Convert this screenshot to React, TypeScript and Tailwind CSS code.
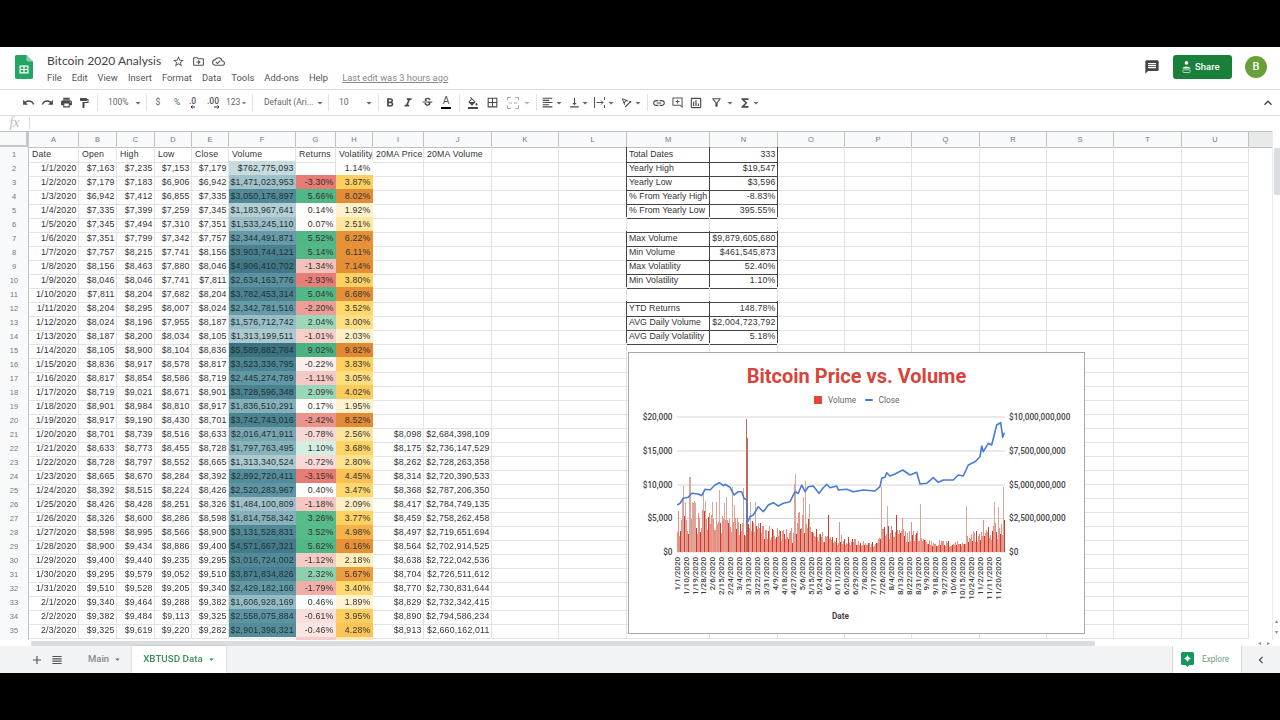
import React from "react";
import {
  MdUndo, MdRedo, MdPrint, MdFormatPaint, MdFormatBold, MdFormatItalic, MdStrikethroughS,
  MdFormatColorFill, MdBorderAll, MdFormatAlignLeft, MdVerticalAlignBottom, MdTextRotationAngleup,
  MdLink, MdOutlineInsertChart, MdOutlineFilterAlt, MdFunctions, MdExpandLess, MdStarBorder,
  MdOutlineDriveFileMove, MdOutlineCloudDone, MdMessage, MdAdd, MdViewHeadline, MdChevronLeft, MdArrowDropDown,
} from "react-icons/md";

const RAW = `1/1/2020|$7,163|$7,235|$7,153|$7,179|$762,775,093||1.14%||
1/2/2020|$7,179|$7,183|$6,906|$6,942|$1,471,023,953|-3.30%|3.87%||
1/3/2020|$6,942|$7,412|$6,855|$7,335|$3,050,176,897|5.66%|8.02%||
1/4/2020|$7,335|$7,399|$7,259|$7,345|$1,183,967,641|0.14%|1.92%||
1/5/2020|$7,345|$7,494|$7,310|$7,351|$1,533,245,110|0.07%|2.51%||
1/6/2020|$7,351|$7,799|$7,342|$7,757|$2,344,491,871|5.52%|6.22%||
1/7/2020|$7,757|$8,215|$7,741|$8,156|$3,903,744,121|5.14%|6.11%||
1/8/2020|$8,156|$8,463|$7,880|$8,046|$4,906,410,702|-1.34%|7.14%||
1/9/2020|$8,046|$8,046|$7,741|$7,811|$2,634,163,776|-2.93%|3.80%||
1/10/2020|$7,811|$8,204|$7,682|$8,204|$3,782,453,314|5.04%|6.68%||
1/11/2020|$8,204|$8,295|$8,007|$8,024|$2,342,781,516|-2.20%|3.52%||
1/12/2020|$8,024|$8,196|$7,955|$8,187|$1,576,712,742|2.04%|3.00%||
1/13/2020|$8,187|$8,200|$8,034|$8,105|$1,313,199,511|-1.01%|2.03%||
1/14/2020|$8,105|$8,900|$8,104|$8,836|$5,589,882,784|9.02%|9.82%||
1/15/2020|$8,836|$8,917|$8,578|$8,817|$3,523,336,795|-0.22%|3.83%||
1/16/2020|$8,817|$8,854|$8,586|$8,719|$2,445,274,789|-1.11%|3.05%||
1/17/2020|$8,719|$9,021|$8,671|$8,901|$3,728,596,348|2.09%|4.02%||
1/18/2020|$8,901|$8,984|$8,810|$8,917|$1,836,510,291|0.17%|1.95%||
1/19/2020|$8,917|$9,190|$8,430|$8,701|$3,742,743,016|-2.42%|8.52%||
1/20/2020|$8,701|$8,739|$8,516|$8,633|$2,016,471,911|-0.78%|2.56%|$8,098|$2,684,398,109
1/21/2020|$8,633|$8,773|$8,455|$8,728|$1,797,763,495|1.10%|3.68%|$8,175|$2,736,147,529
1/22/2020|$8,728|$8,797|$8,552|$8,665|$1,313,340,524|-0.72%|2.80%|$8,262|$2,728,263,358
1/23/2020|$8,665|$8,670|$8,284|$8,392|$2,892,720,411|-3.15%|4.45%|$8,314|$2,720,390,533
1/24/2020|$8,392|$8,515|$8,224|$8,426|$2,520,283,967|0.40%|3.47%|$8,368|$2,787,206,350
1/25/2020|$8,426|$8,428|$8,251|$8,326|$1,484,100,809|-1.18%|2.09%|$8,417|$2,784,749,135
1/26/2020|$8,326|$8,600|$8,286|$8,598|$1,814,758,342|3.26%|3.77%|$8,459|$2,758,262,458
1/27/2020|$8,598|$8,995|$8,566|$8,900|$3,131,528,831|3.52%|4.98%|$8,497|$2,719,651,694
1/28/2020|$8,900|$9,434|$8,886|$9,400|$4,571,667,321|5.62%|6.16%|$8,564|$2,702,914,525
1/29/2020|$9,400|$9,440|$9,235|$9,295|$3,016,724,002|-1.12%|2.18%|$8,638|$2,722,042,536
1/30/2020|$9,295|$9,579|$9,052|$9,510|$3,871,834,826|2.32%|5.67%|$8,704|$2,726,511,612
1/31/2020|$9,510|$9,528|$9,205|$9,340|$2,429,182,166|-1.79%|3.40%|$8,770|$2,730,831,644
2/1/2020|$9,340|$9,464|$9,288|$9,382|$1,606,928,169|0.46%|1.89%|$8,829|$2,732,342,415
2/2/2020|$9,382|$9,484|$9,113|$9,325|$2,558,075,884|-0.61%|3.95%|$8,890|$2,794,586,234
2/3/2020|$9,325|$9,619|$9,220|$9,282|$2,901,398,321|-0.46%|4.28%|$8,913|$2,660,162,011`;
const ROWS = RAW.split("\n").map((l) => l.split("|"));

const SUMMARY: Record<number, [string, string]> = {
  1: ["Total Dates", "333"],
  2: ["Yearly High", "$19,547"],
  3: ["Yearly Low", "$3,596"],
  4: ["% From Yearly High", "-8.83%"],
  5: ["% From Yearly Low", "395.55%"],
  7: ["Max Volume", "$9,879,605,680"],
  8: ["Min Volume", "$461,545,873"],
  9: ["Max Volatility", "52.40%"],
  10: ["Min Volatility", "1.10%"],
  12: ["YTD Returns", "148.78%"],
  13: ["AVG Daily Volume", "$2,004,723,792"],
  14: ["AVG Daily Volatility", "5.18%"],
};

type Stop = [number, [number, number, number]];
function ramp(stops: Stop[], v: number) {
  if (v <= stops[0][0]) return stops[0][1];
  for (let i = 1; i < stops.length; i++) {
    if (v <= stops[i][0]) {
      const [a, ca] = stops[i - 1];
      const [b, cb] = stops[i];
      const t = (v - a) / (b - a);
      return ca.map((c, k) => Math.round(c + (cb[k] - c) * t)) as [number, number, number];
    }
  }
  return stops[stops.length - 1][1];
}
const rgb = (c: number[]) => `rgb(${c[0]},${c[1]},${c[2]})`;
const VOL: Stop[] = [
  [0.76, [200, 219, 223]], [1.2, [180, 206, 212]], [1.5, [159, 192, 200]], [2.0, [122, 168, 178]],
  [2.5, [95, 149, 162]], [3.0, [82, 138, 151]], [4.0, [74, 128, 142]], [5.6, [59, 114, 128]],
];
const RET: Stop[] = [
  [-3.0, [230, 124, 115]], [0.1, [255, 252, 251]], [0.4, [255, 255, 255]], [3.2, [87, 187, 138]], [9, [74, 178, 128]],
];
const VLT: Stop[] = [
  [1.1, [255, 255, 255]], [1.9, [255, 243, 208]], [2.6, [255, 229, 153]], [3.6, [255, 214, 102]],
  [5.0, [246, 176, 74]], [6.1, [230, 145, 56]], [9.8, [226, 136, 50]],
];
const parseNum = (s: string) => parseFloat(s.replace(/[$,%]/g, ""));

const COLS = ["A", "B", "C", "D", "E", "F", "G", "H", "I", "J", "K", "L", "M", "N", "O", "P", "Q", "R", "S", "T", "U"];
const GRID = "grid grid-cols-[29px_50px_38px_38px_37px_37px_67px_40px_37px_51px_68px_67px_68px_83px_68px_67px_67px_68px_67px_67px_68px_67px_23px]";
const CELL = "border-r border-b border-[#e2e3e3] overflow-hidden whitespace-nowrap text-[8.75px] leading-[15px] px-[1.5px]";

function Cell({ text, left, bg, box, ink }: { text?: string; left?: boolean; bg?: string; box?: string; ink?: string }) {
  return (
    <div
      className={`${CELL} ${left ? "text-left pl-[3px]" : "text-right"} ${ink ?? "text-[#333] tracking-[0.02em]"} ${box ?? ""}`}
      style={bg ? { backgroundColor: bg, borderColor: bg } : undefined}
    >
      {text}
    </div>
  );
}

function SheetRow({ n }: { n: number }) {
  const head = ["Date", "Open", "High", "Low", "Close", "Volume", "Returns", "Volatility", "20MA Price", "20MA Volume"];
  const d = n === 1 ? head : ROWS[n - 2];
  const s = SUMMARY[n];
  const boxed = !!s;
  const above = !!SUMMARY[n + 1];
  return (
    <div className={`${GRID} h-[14px]`}>
      <div className="bg-[#f8f9fa] border-r border-b border-[#c0c0c0] text-center text-[7.5px] leading-[15px] text-[#777]">{n}</div>
      {d.map((t, i) => {
        let bg: string | undefined;
        if (n > 1 && i === 5) bg = rgb(ramp(VOL, parseNum(t) / 1e9));
        if (n > 1 && i === 6 && t) bg = rgb(ramp(RET, parseNum(t)));
        if (n > 1 && i === 7) bg = rgb(ramp(VLT, parseNum(t)));
        return (
          <Cell
            key={i}
            text={t}
            left={n === 1}
            bg={bg}
            ink={n > 1 && i === 5 ? "text-[#1d3136] tracking-[0.02em]" : undefined}
          />
        );
      })}
      <Cell />
      <Cell box={boxed ? "border-r-[#444]" : ""} />
      <Cell
        text={s?.[0]}
        left
        ink="text-[#333] tracking-[0.005em]"
        box={`!pl-[2px] !pr-0 ${boxed ? "border-r-[#444] border-b-[#444]" : above ? "border-b-[#444]" : ""}`}
      />
      <Cell text={s?.[1]} box={boxed ? "border-r-[#444] border-b-[#444]" : above ? "border-b-[#444]" : ""} />
      {Array.from({ length: 7 }).map((_, i) => (
        <Cell key={i} />
      ))}
      <div />
    </div>
  );
}

/* chart data */
let seed = 12345;
const rnd = () => {
  seed = (seed * 1664525 + 1013904223) >>> 0;
  return seed / 4294967296;
};
const ENV: [number, number][] = [
  [172, 90], [200, 110], [260, 112], [330, 115], [370, 100], [400, 100], [460, 78], [520, 70], [530, 125], [560, 110], [590, 72],
  [620, 60], [700, 50], [730, 38], [770, 26], [785, 85], [830, 75], [900, 65], [920, 40], [1000, 34], [1035, 42], [1050, 65],
  [1100, 75], [1153, 100],
];
const envAt = (z: number) => {
  for (let i = 1; i < ENV.length; i++) {
    if (z <= ENV[i][0]) {
      const t = (z - ENV[i - 1][0]) / (ENV[i][0] - ENV[i - 1][0]);
      return ENV[i - 1][1] + (ENV[i][1] - ENV[i - 1][1]) * t;
    }
  }
  return 60;
};
const N = 333;
const BAR_W = 328 / N;
const heights: number[] = [];
for (let i = 0; i < N; i++) {
  const x = 677 + i * BAR_W;
  const z = (x - 620) * 3;
  heights.push((envAt(z) * (0.4 + 0.6 * rnd())) / 3);
}
ROWS.forEach((r, i) => {
  heights[i] = (parseNum(r[5]) / 1e10) * 135;
});
const PEAKS: [number, number][] = [
  [193, 408], [198, 455], [211, 382], [220, 458], [226, 458], [252, 425], [258, 452], [278, 455], [290, 455], [298, 420],
  [312, 460], [318, 440], [337, 410], [342, 465], [372, 415], [382, 207], [385, 265], [393, 455], [406, 455], [522, 402],
  [527, 372], [548, 440], [556, 393], [570, 462], [625, 495], [660, 515], [786, 410], [803, 467], [830, 495], [848, 505],
  [875, 515], [900, 463], [1040, 467], [1090, 510], [1122, 456], [1135, 470], [1148, 410],
];
PEAKS.forEach(([zx, zy]) => {
  const i = Math.round((620 + zx / 3 - 677) / BAR_W);
  heights[i] = 552 - (350 + zy / 3);
});
const barFill = (i: number, h: number) => {
  const px = Math.floor(677 + i * BAR_W);
  if (h > 100) return "#c0695e";
  if (h > 44) return "#dba79d";
  return px % 4 === 0 ? "#cb3b2b" : "#ec8f84";
};
const LINE: [number, number][] = [
  [172, 465], [180, 460], [190, 445], [205, 442], [215, 430], [235, 432], [245, 437], [255, 418], [270, 420], [285, 405],
  [298, 398], [310, 407], [315, 403], [330, 412], [342, 435], [355, 425], [365, 425], [372, 445], [380, 450], [382, 518],
  [390, 500], [400, 495], [415, 470], [430, 485], [445, 465], [460, 458], [475, 468], [490, 460], [510, 455], [525, 425],
  [535, 430], [545, 405], [555, 425], [565, 410], [580, 408], [597, 430], [610, 413], [620, 403], [630, 413], [650, 408],
  [655, 420], [680, 418], [700, 425], [730, 420], [765, 423], [780, 410], [785, 385], [795, 382], [800, 368], [810, 378],
  [825, 372], [848, 360], [870, 375], [890, 367], [900, 402], [920, 400], [940, 383], [955, 397], [970, 390], [1000, 390],
  [1015, 375], [1030, 378], [1045, 345], [1065, 335], [1080, 320], [1085, 288], [1090, 305], [1105, 280], [1115, 285],
  [1130, 225], [1142, 218], [1148, 262], [1153, 248],
];
const LINE_PTS = LINE.map(([a, b]) => `${(620 + a / 3).toFixed(1)},${(350 + b / 3).toFixed(1)}`).join(" ");
const XL = [
  "1/1/2020", "1/10/2020", "1/19/2020", "1/28/2020", "2/6/2020", "2/15/2020", "2/24/2020", "3/4/2020", "3/13/2020",
  "3/22/2020", "3/31/2020", "4/9/2020", "4/18/2020", "4/27/2020", "5/6/2020", "5/15/2020", "5/24/2020", "6/2/2020",
  "6/11/2020", "6/20/2020", "6/29/2020", "7/8/2020", "7/17/2020", "7/26/2020", "8/4/2020", "8/13/2020", "8/22/2020",
  "8/31/2020", "9/9/2020", "9/18/2020", "9/27/2020", "10/6/2020", "10/15/2020", "10/24/2020", "11/2/2020", "11/11/2020",
  "11/20/2020",
];
const GL: [number, string, string][] = [
  [417, "$20,000", "$10,000,000,000"],
  [451, "$15,000", "$7,500,000,000"],
  [485, "$10,000", "$5,000,000,000"],
  [518.5, "$5,000", "$2,500,000,000"],
  [552, "$0", "$0"],
];

function Chart() {
  return (
    <div className="absolute left-[628px] top-[221px] w-[457px] h-[282px] bg-white border border-[#a9a9a9]">
      <svg viewBox="629 353 455 280" className="w-full h-full block [font-family:Roboto,sans-serif]">
        <text x="856.5" y="383" textAnchor="middle" fontSize="20" fontWeight="700" fill="#d8443a">Bitcoin Price vs. Volume</text>
        <rect x="814" y="396" width="8" height="8" fill="#e2453a" />
        <text x="828" y="402.8" fontSize="8.3" fill="#666">Volume</text>
        <rect x="865" y="399" width="8" height="2" rx="1" fill="#4a77d4" />
        <text x="878.5" y="402.8" fontSize="8.3" fill="#666">Close</text>
        {GL.map(([y, l, r]) => (
          <g key={y}>
            <line x1="677" x2="1005" y1={y} y2={y} stroke="#d0d0d0" strokeWidth="0.9" />
            <text x="672.5" y={y + 2.8} textAnchor="end" fontSize="8.2" fontWeight="500" fill="#444">{l}</text>
            <text x="1009" y={y + 2.8} fontSize="8.2" fontWeight="500" fill="#444">{r}</text>
          </g>
        ))}
        {heights.map((h, i) => (
          <rect key={i} x={Math.floor(677 + i * BAR_W)} y={552 - h} width="1" height={h} fill={barFill(i, h)} shapeRendering="crispEdges" />
        ))}
        <polyline points={LINE_PTS} fill="none" stroke="#4a7bd6" strokeWidth="1.6" strokeLinejoin="round" />
        {XL.map((t, i) => (
          <text
            key={t}
            transform={`translate(${679.7 + i * 8.92} 557) rotate(-90)`}
            textAnchor="end"
            fontSize="8"
            fontWeight="500"
            fill="#3c3c3c"
          >
            {t}
          </text>
        ))}
        <text x="840.5" y="618.5" textAnchor="middle" fontSize="8.2" fontWeight="700" fill="#444">Date</text>
      </svg>
    </div>
  );
}

/* icons */
function SheetsLogo() {
  return (
    <svg width="18" height="24" viewBox="0 0 18 24" className="block">
      <path d="M1.5 0H11.5L18 6.5V22.5A1.5 1.5 0 0 1 16.5 24H1.5A1.5 1.5 0 0 1 0 22.5V1.5A1.5 1.5 0 0 1 1.5 0Z" fill="#23a566" />
      <path d="M11.5 0L18 6.5H13A1.5 1.5 0 0 1 11.5 5Z" fill="#8ed1b1" />
      <path d="M4.5 10.5H13.5V18.5H4.5ZM5.7 11.7V13.9H8.4V11.7ZM9.6 11.7V13.9H12.3V11.7ZM5.7 15.1V17.3H8.4V15.1ZM9.6 15.1V17.3H12.3V15.1Z" fill="#fff" fillRule="evenodd" />
    </svg>
  );
}
const Tiny = ({ cls }: { cls: string }) => (
  <div className={`${cls} flex items-center justify-center`}>
    <MdArrowDropDown size={12} color="#666" className="shrink-0" />
  </div>
);
const Sep = ({ cls }: { cls: string }) => <div className={`${cls} w-px h-[17px] bg-[#e0e2e4]`} />;
const Slot = ({ cls, children }: { cls: string; children: React.ReactNode }) => (
  <div className={`${cls} flex items-center justify-center text-[#4a4a4a] shrink-0`}>{children}</div>
);

function Toolbar() {
  const t = "text-[8.5px] text-[#666] [font-family:Roboto,sans-serif] whitespace-nowrap";
  return (
    <div className="h-[25px] flex items-center pl-[19px]">
      <Slot cls="w-[19px]"><MdUndo size={13} /></Slot>
      <Slot cls="w-[19px]"><MdRedo size={13} /></Slot>
      <Slot cls="w-[18px]"><MdPrint size={13} /></Slot>
      <Slot cls="w-[17px]"><MdFormatPaint size={12} /></Slot>
      <Sep cls="ml-[5px]" />
      <div className={`ml-[10px] w-[20px] ${t}`}>100%</div>
      <Tiny cls="ml-[4px] w-[12px]" />
      <Sep cls="ml-[2px]" />
      <div className={`ml-[3px] w-[16px] text-center ${t}`}>$</div>
      <div className={`w-[22px] text-center ${t}`}>%</div>
      <Slot cls="w-[12px]">
        <svg width="12" height="14" viewBox="0 0 12 14"><text x="1" y="8" fontSize="8.5" fontWeight="500" fill="#555" fontFamily="Roboto">.0</text><path d="M7 11H3M4.5 9.5L3 11L4.5 12.5" stroke="#333" fill="none" strokeWidth="1" /></svg>
      </Slot>
      <Slot cls="ml-[6px] w-[16px]">
        <svg width="16" height="14" viewBox="0 0 16 14"><text x="1" y="8" fontSize="8.5" fontWeight="500" fill="#555" fontFamily="Roboto">.00</text><path d="M8 11H13M11.5 9.5L13 11L11.5 12.5" stroke="#333" fill="none" strokeWidth="1" /></svg>
      </Slot>
      <div className={`ml-[4px] w-[23px] flex items-center ${t}`}>123<MdArrowDropDown size={10} className="shrink-0 -ml-px" /></div>
      <Sep cls="ml-[3px]" />
      <div className={`ml-[11px] w-[48px] ${t}`}>Default (Ari...</div>
      <Tiny cls="ml-[2px] w-[12px]" />
      <Sep cls="ml-[2px]" />
      <div className={`ml-[10px] w-[10px] ${t}`}>10</div>
      <Tiny cls="ml-[14px] w-[12px]" />
      <Sep cls="ml-[3px]" />
      <Slot cls="ml-[2px] w-[18px]"><MdFormatBold size={14} /></Slot>
      <Slot cls="w-[18px]"><MdFormatItalic size={14} /></Slot>
      <Slot cls="w-[20px]"><MdStrikethroughS size={13} /></Slot>
      <div className="w-[18px] flex flex-col items-center shrink-0">
        <span className="text-[10px] leading-[10px] text-[#555]">A</span>
        <span className="mt-[1px] w-[10px] h-[2px] bg-black" />
      </div>
      <Sep cls="ml-[4px]" />
      <Slot cls="ml-[3px] w-[20px]"><MdFormatColorFill size={12} /></Slot>
      <Slot cls="w-[19px]"><MdBorderAll size={13} /></Slot>
      <Slot cls="w-[22px]">
        <svg width="12" height="12" viewBox="0 0 12 12" fill="none" stroke="#aaa" strokeWidth="1"><path d="M.5 3.5V.5H4M8 .5H11.5V3.5M.5 8.5V11.5H4M8 11.5H11.5V8.5M2 6H5M10 6H7" /></svg>
      </Slot>
      <Tiny cls="w-[6px] opacity-50" />
      <Sep cls="ml-[6px]" />
      <Slot cls="ml-[1px] w-[18px]"><MdFormatAlignLeft size={13} /></Slot>
      <Tiny cls="w-[6px]" />
      <Slot cls="ml-[4px] w-[16px]"><MdVerticalAlignBottom size={13} /></Slot>
      <Tiny cls="w-[6px]" />
      <Slot cls="ml-[3px] w-[16px]">
        <svg width="13" height="13" viewBox="0 0 13 13" fill="none" stroke="#555" strokeWidth="1"><path d="M1.5 1V12M11.5 1V4M11.5 9V12M3.5 6.5H10M8 4.5L10 6.5L8 8.5" /></svg>
      </Slot>
      <Tiny cls="ml-[1px] w-[6px]" />
      <Slot cls="ml-[4px] w-[16px]"><MdTextRotationAngleup size={13} /></Slot>
      <Tiny cls="ml-[1px] w-[6px]" />
      <Sep cls="ml-[6px]" />
      <Slot cls="ml-[2px] w-[18px]"><MdLink size={14} /></Slot>
      <Slot cls="w-[18px]">
        <svg width="11" height="11" viewBox="0 0 12 12" fill="none" stroke="#555" strokeWidth="1.1"><path d="M1 1H11V11L9 9H1ZM6 3V7M4 5H8" /></svg>
      </Slot>
      <Slot cls="ml-[1px] w-[18px]"><MdOutlineInsertChart size={14} /></Slot>
      <Slot cls="ml-[2px] w-[18px]"><MdOutlineFilterAlt size={13} /></Slot>
      <Tiny cls="ml-[2px] w-[6px]" />
      <Slot cls="ml-[4px] w-[16px]"><MdFunctions size={14} /></Slot>
      <Tiny cls="w-[6px]" />
      <div className="ml-auto mr-[4px] text-[#444]"><MdExpandLess size={16} /></div>
    </div>
  );
}

export default function App() {
  const sans = "[font-family:Roboto,sans-serif]";
  return (
    <div className="w-[1280px] h-[720px] bg-black flex flex-col overflow-hidden [font-family:'Liberation_Sans',Arial,sans-serif]">
      <div className="h-[47px] shrink-0" />
      <div className="h-[626px] bg-white flex flex-col blur-[0.3px]">
        {/* title */}
        <div className={`h-[42px] flex items-start ${sans}`}>
          <div className="ml-[15px] mt-[8px]"><SheetsLogo /></div>
          <div className="ml-[14px] mt-[6px] flex flex-col">
            <div className="flex items-center h-[16px]">
              <span className="text-[12.1px] text-[#444] [font-family:Lato,sans-serif]">Bitcoin 2020 Analysis</span>
              <MdStarBorder size={13} color="#555" className="ml-[11px]" />
              <MdOutlineDriveFileMove size={13} color="#555" className="ml-[7px]" />
              <MdOutlineCloudDone size={13} color="#555" className="ml-[7px]" />
            </div>
            <div className="flex items-center mt-[1px] h-[16px] text-[9.4px] text-[#555] gap-[10px]">
              {["File", "Edit", "View", "Insert", "Format", "Data", "Tools", "Add-ons", "Help"].map((m) => (
                <span key={m}>{m}</span>
              ))}
              <span className="ml-[4px] text-[9.3px] underline text-[#888]">Last edit was 3 hours ago</span>
            </div>
          </div>
          <div className="ml-auto mt-[8px] flex items-center">
            <MdMessage size={16} color="#444" />
            <div className="ml-[13px] w-[59px] h-[24px] bg-[#188038] rounded-[3px] flex items-center pl-[8px] text-white text-[9.5px] font-medium">
              <svg width="11" height="14" viewBox="0 0 12 14" fill="#fff"><circle cx="6" cy="2.5" r="2" /><path d="M1.5 8.5C1.5 6 10.5 6 10.5 8.5Z" /><rect x="2" y="10" width="8" height="3" rx="1" fill="none" stroke="#fff" strokeWidth="0.7" /></svg>
              <span className="ml-[3px]">Share</span>
            </div>
            <div className="ml-[13px] mr-[13px] w-[22px] h-[22px] rounded-full bg-[#689f38] text-white text-[11px] font-medium flex items-center justify-center">B</div>
          </div>
        </div>
        <div className="h-px bg-[#dadce0]" />
        <Toolbar />
        <div className="h-px bg-[#dadce0]" />
        {/* formula bar */}
        <div className="h-[15px] flex items-start pt-[1px]">
          <span className="w-[30px] text-center text-[14px] italic text-[#bbb] [font-family:'Liberation_Serif',serif] border-r border-[#dadce0] h-[12px] leading-[11px]">fx</span>
        </div>
        {/* sheet */}
        <div className="h-[509px] flex relative overflow-hidden">
          <div className="w-[1272px] flex flex-col">
            <div className={`${GRID} h-[16px] bg-[#f8f9fa] border-t border-[#c0c0c0]`}>
              <div className="border-r-[3px] border-b-[3px] border-[#c4c7c9]" />
              {COLS.map((c) => (
                <div key={c} className="border-r border-b border-[#c0c0c0] text-center text-[7.5px] leading-[15px] text-[#777]">{c}</div>
              ))}
              <div className="bg-[#e8e9ea] border-b border-[#c0c0c0]" />
            </div>
            {Array.from({ length: 35 }).map((_, i) => (
              <SheetRow key={i} n={i + 1} />
            ))}
            <div className={`${GRID} h-[3px] overflow-hidden`}>
              <div className="bg-[#f8f9fa] border-r border-[#c0c0c0]" />
              <div /><div /><div /><div /><div />
              <div className="bg-[#f0f3f4]" />
              <div className="bg-[#f4cccc]" />
              <div className="bg-[#ffe9b5]" />
            </div>
          </div>
          <div className="w-[8px] bg-white border-l border-[#e8eaed] flex flex-col items-center">
            <div className="mt-[17px] w-[6px] h-[47px] bg-[#dadce0] rounded-[1px]" />
            <div className="mt-auto mb-[2px] text-[6px] leading-[11px] text-[#888] text-center">▴<br />▾</div>
          </div>
          <Chart />
        </div>
        {/* h scroll */}
        <div className="h-[6px] bg-white flex items-center">
          <div className="ml-[31px] w-[1064px] h-[5px] bg-[#dadce0] rounded-[1px]" />
          <div className="ml-auto mr-[10px] flex gap-[6px] text-[6px] leading-[6px] text-[#888]"><span>◂</span><span>▸</span></div>
        </div>
        {/* tabs */}
        <div className={`h-[27px] bg-[#f1f3f4] flex items-center ${sans}`}>
          <MdAdd size={14} color="#555" className="ml-[30px]" />
          <MdViewHeadline size={14} color="#555" className="ml-[6px]" />
          <span className="ml-[24px] text-[9.5px] font-medium text-[#888]">Main</span>
          <MdArrowDropDown size={11} color="#777" className="ml-[3px]" />
          <div className="ml-[9px] w-[94px] h-[27px] bg-white flex items-center pl-[11px] text-[9.8px] font-medium text-[#3f8f5c] shadow-[0_0_2px_rgba(0,0,0,0.2)]">
            XBTUSD Data
            <MdArrowDropDown size={11} color="#3f8f5c" className="ml-[3px]" />
          </div>
          <div className="ml-auto w-[70px] h-[27px] bg-white border-x border-[#d5d7d9] flex items-center pl-[8px] text-[8.2px] text-[#6f9a85]">
            <svg width="13" height="15" viewBox="0 0 13 15"><path d="M1.5 0H11.5A1.5 1.5 0 0 1 13 1.5V11.5A1.5 1.5 0 0 1 11.5 13H8.5L6.5 15L4.5 13H1.5A1.5 1.5 0 0 1 0 11.5V1.5A1.5 1.5 0 0 1 1.5 0Z" fill="#16965a" /><path d="M6.5 3L7.7 5.3L10 6.5L7.7 7.7L6.5 10L5.3 7.7L3 6.5L5.3 5.3Z" fill="#fff" /></svg>
            <span className="ml-[8px]">Explore</span>
          </div>
          <MdChevronLeft size={14} color="#444" className="ml-[12px] mr-[12px]" />
        </div>
      </div>
      <div className="h-[47px] shrink-0" />
    </div>
  );
}
